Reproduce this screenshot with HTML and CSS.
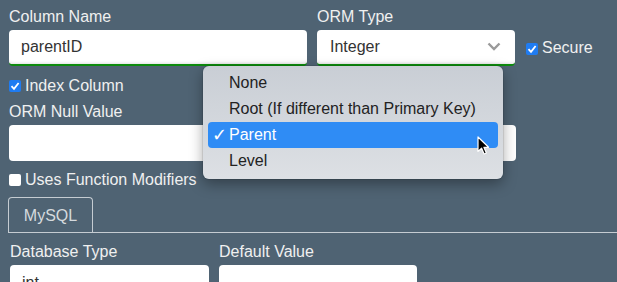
FILE: index.html
```html
<!DOCTYPE html>
<html lang="en">
<head>
<meta charset="UTF-8" />
<title>Column Editor</title>
<link rel="stylesheet" href="styles.css">
</head>
<body>

<div class="form">
  <div class="row">
    <div class="field name-field">
      <label class="label">Column Name</label>
      <div class="input valid">parentID</div>
    </div>
    <div class="field type-field">
      <label class="label">ORM Type</label>
      <div class="input select valid">
        <span>Integer</span>
        <svg class="chevron" width="14" height="9" viewBox="0 0 14 9"><polyline points="1.5,1.5 7,7 12.5,1.5" fill="none" stroke="#9a9a9a" stroke-width="2.4" /></svg>
      </div>
    </div>
    <div class="check secure">
      <span class="box checked"><svg width="12" height="12" viewBox="0 0 12 12"><polyline points="2.5,6.2 5,8.8 9.6,3" fill="none" stroke="#fff" stroke-width="1.8" /></svg></span>
      Secure
    </div>
  </div>

  <div class="check index-check">
    <span class="box checked"><svg width="12" height="12" viewBox="0 0 12 12"><polyline points="2.5,6.2 5,8.8 9.6,3" fill="none" stroke="#fff" stroke-width="1.8" /></svg></span>
    Index Column
  </div>

  <div class="field null-field">
    <label class="label">ORM Null Value</label>
    <div class="input"></div>
  </div>

  <div class="check modifiers-check">
    <span class="box"></span>
    Uses Function Modifiers
  </div>

  <div class="tabs">
    <div class="tab">MySQL</div>
  </div>

  <div class="panel">
    <div class="field db-field">
      <label class="label">Database Type</label>
      <div class="input">int</div>
    </div>
    <div class="field default-field">
      <label class="label">Default Value</label>
      <div class="input"></div>
    </div>
  </div>
</div>

<!-- open popup of the ORM Type select -->
<div class="dropdown-menu">
  <div class="option">None</div>
  <div class="option">Root (If different than Primary Key)</div>
  <div class="option selected"><span class="tick">✓</span>Parent</div>
  <div class="option">Level</div>
</div>

<svg class="cursor" width="13" height="20" viewBox="0 0 13 20">
  <path d="M1,1 L1,15.5 L4.6,12.2 L7.1,18 L9.4,17 L6.9,11.3 L11.6,11.3 Z" fill="#000" stroke="#fff" stroke-width="1.2" stroke-linejoin="round" />
</svg>

</body>
</html>
```

FILE: styles.css
```css
body {
  margin: 0;
  padding: 8px 0 0 9px;
  font-family: 'Liberation Sans', Arial, sans-serif;
  font-size: 16px;
  background-color: #4f6373;
  color: #f0f0f0;
  height: 282px;
  box-sizing: border-box;
  overflow: hidden;
  position: relative;
}

.row { display: flex; gap: 10px; }

.field { display: flex; flex-direction: column; }
.name-field { width: 298px; }
.type-field { width: 198px; }
.null-field { width: 507px; margin-top: 8px; }

.label {
  display: block;
  line-height: 18px;
  margin-bottom: 4px;
  color: #f0f0f0;
}

.input {
  height: 36px;
  box-sizing: border-box;
  background-color: #fff;
  border-radius: 4px;
  padding: 0 12px;
  line-height: 36px;
  color: #333;
}

.input.valid {
  border-bottom: 2px solid #0d8a0d;
  line-height: 34px;
  box-shadow: inset 0 -3px 3px -2px rgba(0,0,0,0.12);
}

.select {
  display: flex;
  align-items: center;
  justify-content: space-between;
  padding: 0 14px 0 13px;
}

.chevron { margin-top: -2px; }

.check {
  display: flex;
  align-items: center;
  line-height: 18px;
  color: #f0f0f0;
}

.box {
  display: inline-flex;
  width: 12px;
  height: 12px;
  margin-right: 4px;
  border-radius: 2px;
  background-color: #fff;
  box-sizing: border-box;
}

.box.checked { background-color: #1f7cf2; }

.secure { margin: 22px 0 0 1px; height: 36px; }
.secure .box { margin-top: 2px; }
.index-check { margin-top: 11px; }
.modifiers-check { margin-top: 10px; }

.tabs {
  display: flex;
  margin: 8px 0 0 -1px;
  border-bottom: 1px solid #c5ccd2;
}

.tab {
  width: 85px;
  height: 35px;
  box-sizing: border-box;
  border: 1px solid #c5ccd2;
  border-bottom: none;
  border-radius: 4px 4px 0 0;
  text-align: center;
  line-height: 36px;
  color: #d5dade;
}

.panel {
  display: flex;
  gap: 10px;
  margin-top: 10px;
  padding-left: 1px;
}

.db-field { width: 199px; }
.default-field { width: 198px; }

.dropdown-menu {
  position: absolute;
  left: 203px;
  top: 66px;
  width: 300px;
  height: 113px;
  box-sizing: border-box;
  padding: 4px 5px 5px;
  border-radius: 6px;
  background: linear-gradient(#c9ced5, #dde0e4);
  box-shadow: 0 0 0 1px rgba(0,0,0,0.08), 0 5px 14px rgba(0,0,0,0.35);
  color: #222;
}

.option {
  height: 26px;
  line-height: 26px;
  padding-left: 21px;
  border-radius: 4px;
  white-space: nowrap;
}

.option.selected {
  position: relative;
  background-color: #2f8cf5;
  color: #fff;
}

.tick {
  position: absolute;
  left: 4px;
  font-family: 'DejaVu Sans', sans-serif;
  font-size: 18px;
}

.cursor {
  position: absolute;
  left: 477px;
  top: 136px;
}
```
